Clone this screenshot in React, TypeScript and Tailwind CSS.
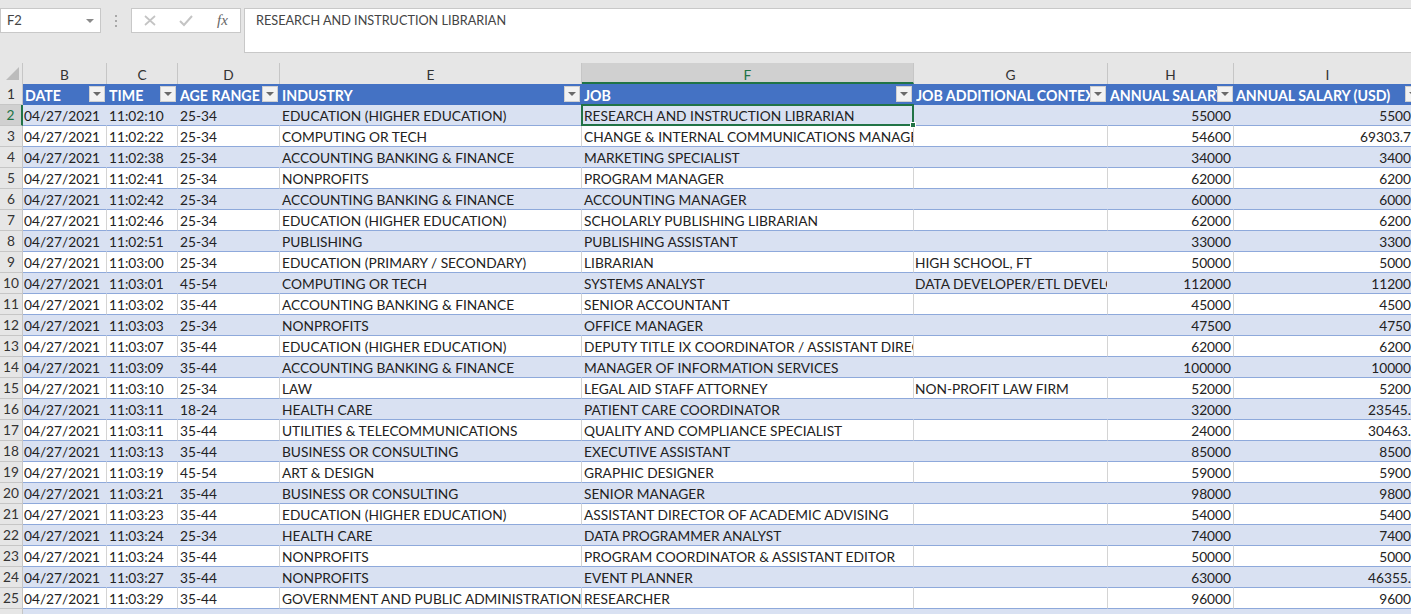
import React from 'react';

const colWidths = ['w-[84px]', 'w-[71px]', 'w-[102px]', 'w-[302px]', 'w-[332px]', 'w-[194px]', 'w-[126px]', 'w-[188px]'];
const colLetters = ['B', 'C', 'D', 'E', 'F', 'G', 'H', 'I'];
const headers = ['DATE', 'TIME', 'AGE RANGE', 'INDUSTRY', 'JOB', 'JOB ADDITIONAL CONTEXT', 'ANNUAL SALARY', 'ANNUAL SALARY (USD)'];

const rows: string[][] = [
  ['11:02:10', '25-34', 'EDUCATION (HIGHER EDUCATION)', 'RESEARCH AND INSTRUCTION LIBRARIAN', '', '55000', '55000'],
  ['11:02:22', '25-34', 'COMPUTING OR TECH', 'CHANGE & INTERNAL COMMUNICATIONS MANAGER', '', '54600', '69303.78'],
  ['11:02:38', '25-34', 'ACCOUNTING BANKING & FINANCE', 'MARKETING SPECIALIST', '', '34000', '34000'],
  ['11:02:41', '25-34', 'NONPROFITS', 'PROGRAM MANAGER', '', '62000', '62000'],
  ['11:02:42', '25-34', 'ACCOUNTING BANKING & FINANCE', 'ACCOUNTING MANAGER', '', '60000', '60000'],
  ['11:02:46', '25-34', 'EDUCATION (HIGHER EDUCATION)', 'SCHOLARLY PUBLISHING LIBRARIAN', '', '62000', '62000'],
  ['11:02:51', '25-34', 'PUBLISHING', 'PUBLISHING ASSISTANT', '', '33000', '33000'],
  ['11:03:00', '25-34', 'EDUCATION (PRIMARY / SECONDARY)', 'LIBRARIAN', 'HIGH SCHOOL, FT', '50000', '50000'],
  ['11:03:01', '45-54', 'COMPUTING OR TECH', 'SYSTEMS ANALYST', 'DATA DEVELOPER/ETL DEVELOPER', '112000', '112000'],
  ['11:03:02', '35-44', 'ACCOUNTING BANKING & FINANCE', 'SENIOR ACCOUNTANT', '', '45000', '45000'],
  ['11:03:03', '25-34', 'NONPROFITS', 'OFFICE MANAGER', '', '47500', '47500'],
  ['11:03:07', '35-44', 'EDUCATION (HIGHER EDUCATION)', 'DEPUTY TITLE IX COORDINATOR / ASSISTANT DIRECTOR', '', '62000', '62000'],
  ['11:03:09', '35-44', 'ACCOUNTING BANKING & FINANCE', 'MANAGER OF INFORMATION SERVICES', '', '100000', '100000'],
  ['11:03:10', '25-34', 'LAW', 'LEGAL AID STAFF ATTORNEY', 'NON-PROFIT LAW FIRM', '52000', '52000'],
  ['11:03:11', '18-24', 'HEALTH CARE', 'PATIENT CARE COORDINATOR', '', '32000', '23545.6'],
  ['11:03:11', '35-44', 'UTILITIES & TELECOMMUNICATIONS', 'QUALITY AND COMPLIANCE SPECIALIST', '', '24000', '30463.2'],
  ['11:03:13', '35-44', 'BUSINESS OR CONSULTING', 'EXECUTIVE ASSISTANT', '', '85000', '85000'],
  ['11:03:19', '45-54', 'ART & DESIGN', 'GRAPHIC DESIGNER', '', '59000', '59000'],
  ['11:03:21', '35-44', 'BUSINESS OR CONSULTING', 'SENIOR MANAGER', '', '98000', '98000'],
  ['11:03:23', '35-44', 'EDUCATION (HIGHER EDUCATION)', 'ASSISTANT DIRECTOR OF ACADEMIC ADVISING', '', '54000', '54000'],
  ['11:03:24', '25-34', 'HEALTH CARE', 'DATA PROGRAMMER ANALYST', '', '74000', '74000'],
  ['11:03:24', '35-44', 'NONPROFITS', 'PROGRAM COORDINATOR & ASSISTANT EDITOR', '', '50000', '50000'],
  ['11:03:27', '35-44', 'NONPROFITS', 'EVENT PLANNER', '', '63000', '46355.4'],
  ['11:03:29', '35-44', 'GOVERNMENT AND PUBLIC ADMINISTRATION', 'RESEARCHER', '', '96000', '96000'],
];

function FilterButton({ tight }: { tight: boolean }) {
  return (
    <span className={`absolute top-[2px] flex h-[16px] w-[16px] items-center justify-center border border-[#d0d0d0] bg-[#f2f2f2] ${tight ? 'right-[1px]' : 'right-[2px]'}`}>
      <span className="h-0 w-0 border-x-[4px] border-t-[4px] border-x-transparent border-t-[#6a6a6a]" />
    </span>
  );
}

export default function App() {
  return (
    <div className="h-[614px] w-[1411px] overflow-hidden bg-white font-['Lato','Liberation_Sans',sans-serif] text-[13.72px] text-[#222]">
      {/* Formula bar */}
      <div className="flex h-[63px] flex-col bg-[#e6e6e6]">
        <div className="flex h-[53px] items-start pt-[8px]">
          <div className="flex h-[25px] w-[101px] shrink-0 items-center justify-between border border-[#c8c8c8] bg-white pl-[6px] pr-[6px] text-[#444]">
            <span className="text-[13px]">F2</span>
            <span className="h-0 w-0 border-x-[4px] border-t-[4px] border-x-transparent border-t-[#8a8a8a]" />
          </div>
          <div className="flex h-[25px] w-[30px] shrink-0 flex-col items-center justify-center gap-[3px]">
            <span className="h-[2px] w-[2px] bg-[#a8a8a8]" />
            <span className="h-[2px] w-[2px] bg-[#a8a8a8]" />
            <span className="h-[2px] w-[2px] bg-[#a8a8a8]" />
          </div>
          <div className="flex h-[25px] w-[110px] shrink-0 items-center border border-[#c8c8c8] bg-white">
            <svg className="shrink-0" width="85" height="23" viewBox="0 0 85 23" fill="none">
              <path d="M13 7l10 9M23 7l-10 9" stroke="#c4c4c4" strokeWidth="1.7" />
              <path d="M48 12l4 4 8-9" stroke="#c4c4c4" strokeWidth="2" />
            </svg>
            <span className="font-['Liberation_Serif',serif] text-[15px] italic leading-none text-[#666]">fx</span>
          </div>
          <div className="-mr-[4px] ml-[3px] flex h-[45px] flex-1 items-start border border-[#c8c8c8] bg-white pl-[11px] pt-[2px] text-[12.7px] text-[#444]">
            RESEARCH AND INSTRUCTION LIBRARIAN
          </div>
        </div>
      </div>

      {/* Column letters */}
      <div className="flex h-[21px] bg-[#e6e6e6] text-[#333]">
        <div className="relative w-[23px] shrink-0 border-r border-[#c6c6c6]">
          <span className="absolute bottom-[4px] right-[3px] h-0 w-0 border-b-[13px] border-l-[13px] border-b-[#bcbcbc] border-l-transparent" />
        </div>
        {colLetters.map((letter, i) => (
          <div
            key={letter}
            className={`${colWidths[i]} shrink-0 border-r border-[#c6c6c6] pt-[2px] text-center ${letter === 'F' ? 'border-b-2 border-b-[#217346] bg-[#d0d0d0] text-[#217346]' : ''}`}
          >
            {letter}
          </div>
        ))}
      </div>

      {/* Sheet */}
      <div className="relative">
        <div className="flex h-[21px] text-[14.2px] font-bold text-white">
          <div className="flex w-[23px] shrink-0 items-center justify-center border-r border-b border-[#c6c6c6] bg-[#e6e6e6] pt-[1px] text-[13.75px] font-normal text-[#333]">1</div>
          {headers.map((h, i) => (
            <div key={h} className={`${colWidths[i]} relative shrink-0 bg-[#4472c4] pl-[2px] leading-[23px]`}>
              <div className="mr-[16px] overflow-hidden whitespace-nowrap">{h}</div>
              <FilterButton tight={i >= 6} />
            </div>
          ))}
        </div>

        {rows.map((row, r) => {
          const rowNo = r + 2;
          const banded = r % 2 === 0;
          return (
            <div key={rowNo} className="flex h-[21px]">
              <div className={`flex w-[23px] shrink-0 items-center justify-center border-b border-[#c6c6c6] pt-[1px] ${rowNo === 2 ? 'border-r-2 border-r-[#217346] bg-[#d0d0d0] text-[#217346]' : 'border-r bg-[#e6e6e6] text-[#333]'}`}>
                {rowNo}
              </div>
              {['04/27/2021', ...row].map((cell, c) => (
                <div
                  key={c}
                  className={`${colWidths[c]} shrink-0 overflow-hidden whitespace-nowrap border-r border-b border-b-[#8ea9db] pr-[2px] leading-[22px] ${c === 0 || c === 5 ? 'pl-[1px]' : 'pl-[2px]'} ${banded ? 'border-r-transparent bg-[#d9e1f2]' : 'border-r-[#d4d4d4] bg-white'} ${c >= 6 ? 'text-right' : ''}`}
                >
                  {cell}
                </div>
              ))}
            </div>
          );
        })}

        {/* row 26 */}
        <div className="flex h-[21px]">
          <div className="w-[23px] shrink-0 border-r border-[#c6c6c6] bg-[#e6e6e6]" />
          <div className="flex-1 bg-[#d9e1f2]" />
        </div>

        {/* selected cell */}
        <div className="pointer-events-none absolute left-[581px] top-[20px] h-[22px] w-[333px] border-2 border-[#217346]">
          <span className="absolute -bottom-[4px] -right-[4px] h-[6px] w-[6px] border border-white bg-[#217346]" />
        </div>
      </div>
    </div>
  );
}
